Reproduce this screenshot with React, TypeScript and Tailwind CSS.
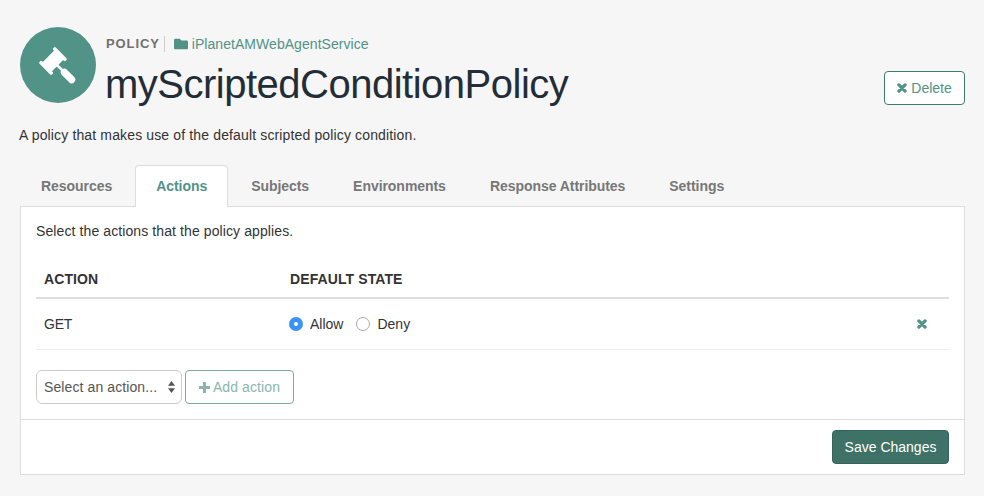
import { FaFolder } from "react-icons/fa";

function Gavel() {
  return (
    <svg width="48" height="48" viewBox="0 0 48 48" fill="white">
      <g transform="translate(19 20) rotate(45)">
        <rect x="-6.5" y="-10" width="13" height="20" />
        <rect x="-8.8" y="-11.5" width="17.6" height="3.6" rx="1.3" />
        <rect x="-8.8" y="7.9" width="17.6" height="3.6" rx="1.3" />
        <rect x="6" y="-1.3" width="8" height="2.6" />
        <rect x="12.5" y="-3.6" width="17.5" height="7.2" rx="3.6" />
      </g>
    </svg>
  );
}

function Cross() {
  return (
    <svg width="10" height="10" viewBox="0 0 10 10" stroke="currentColor" strokeWidth="3.3" strokeLinecap="round" className="shrink-0">
      <path d="M1.9 1.9 8.100 8.100M8.100 1.900 1.900 8.100" />
    </svg>
  );
}

function Plus() {
  return (
    <svg width="11" height="11" viewBox="0 0 11 11" fill="currentColor" className="shrink-0">
      <path d="M4 .5q0-.5.5-.5h2q.5 0 .5.5V4h3.500q.5 0 .5.5v2q0 .5-.5.5H7v3.500q0 .5-.5.5h-2q-.5 0-.5-.5V7H.5Q0 7 0 6.500v-2Q0 4 .5 4H4z" />
    </svg>
  );
}

const tabs = ["Resources", "Actions", "Subjects", "Environments", "Response Attributes", "Settings"];

export default function App() {
  return (
    <div className="w-[984px] h-[496px] overflow-hidden bg-[#f6f6f6] px-5 pt-[27px] font-['Liberation_Sans',Arial,sans-serif] text-[14px] text-[#333]">
      <div className="flex items-end">
        <div className="w-[76px] h-[76px] rounded-full bg-[#519387] flex items-center justify-center shrink-0">
          <Gavel />
        </div>
        <div className="ml-[9px] flex-1 h-[76px]">
          <div className="flex items-center h-[18px] mt-2 leading-[18px]">
            <span className="ml-px font-bold text-[#746e6e] tracking-[0.9px] text-[13px]">POLICY</span>
            <span className="w-px h-4 bg-[#ccc] ml-[4px] mr-[9px]" />
            <FaFolder className="text-[#519387] text-[14px] mr-[4px]" />
            <span className="text-[#519387] text-[14px] tracking-[0.05px]">iPlanetAMWebAgentService</span>
          </div>
          <h1 className="text-[40px] leading-[44px] mt-[9px] text-[#222d38] tracking-[-0.5px] font-normal">myScriptedConditionPolicy</h1>
        </div>
        <button className="mb-[-2px] -mr-px w-[81px] h-[34px] flex items-center justify-center gap-[4px] border border-[#3e7a6c] rounded bg-white text-[14px] text-[#519387]">
          <Cross />
          Delete
        </button>
      </div>
      <p className="mt-[23px] -ml-px text-[14px] leading-[18px] text-[#333] tracking-[0.14px]">A policy that makes use of the default scripted policy condition.</p>
      <div className="mt-[21px] -ml-px flex h-[42px] relative z-10">
        {tabs.map((t) => (
          <div
            key={t}
            className={
              t === "Actions"
                ? "w-[93px] ml-px mr-px h-[42px] pt-[10px] text-center bg-white border border-[#ddd] border-b-0 rounded-t text-[14px] font-bold text-[#519387] tracking-[-0.05px]"
                : "px-[22px] h-[42px] pt-[11px] text-[14px] font-bold text-[#777] tracking-[-0.05px]"
            }
          >
            {t}
          </div>
        ))}
      </div>
      <div className="w-[945px] h-[269px] -mt-px border border-[#ddd] bg-white flex flex-col">
        <div className="flex-1 px-[15px] pt-[15px]">
          <p className="leading-[18px] text-[14px] tracking-[0.1px]">Select the actions that the policy applies.</p>
          <div className="mt-[20px] h-[39px] pt-[2px] flex items-center border-b-2 border-[#ddd] font-bold text-[#333] px-2 tracking-[0.1px]">
            <span className="w-[246px]">ACTION</span>
            <span>DEFAULT STATE</span>
          </div>
          <div className="h-[51px] flex items-center border-b border-[#eee] px-2">
            <span className="w-[245px] tracking-[-0.2px]">GET</span>
            <span className="w-[14px] h-[14px] rounded-full bg-[#3b93f7] flex items-center justify-center mr-[7px]">
              <span className="w-1 h-1 rounded-full bg-white" />
            </span>
            <span>Allow</span>
            <span className="w-[14px] h-[14px] rounded-full border border-[#aaa] bg-white ml-[13px] mr-[7px]" />
            <span>Deny</span>
            <span className="ml-auto mr-[14px] text-[#519387]"><Cross /></span>
          </div>
          <div className="mt-[20px] flex gap-[3px]">
            <div className="w-[146px] h-[34px] border border-[#ccc] rounded-[6px] bg-white flex items-center pl-[7px] text-[#555] relative tracking-[0.1px]">
              Select an action...
              <svg className="absolute right-[6px] top-[10px]" width="7" height="12" viewBox="0 0 7 12" fill="#555">
                <path d="M3.500 0 7 4.800H0zM3.500 12 0 7.200h7z" />
              </svg>
            </div>
            <button className="w-[109px] h-[34px] border border-[#7dab9f] rounded flex items-center justify-center gap-[3px] text-[#8ab5ab] bg-white tracking-[0.1px]">
              <Plus />
              Add action
            </button>
          </div>
        </div>
        <div className="h-[55px] border-t border-[#ddd] flex items-center justify-end px-[15px]">
          <button className="w-[117px] h-[34px] rounded bg-[#3e7266] text-white border border-[#35635a]">Save Changes</button>
        </div>
      </div>
    </div>
  );
}
